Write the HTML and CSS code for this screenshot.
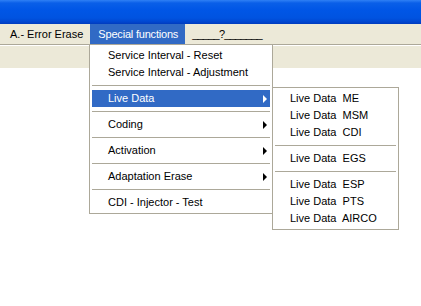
FILE: index.html
```html
<!DOCTYPE html>
<html>
<head>
<meta charset="utf-8">
<link rel="stylesheet" href="styles.css">
</head>
<body>
<div class="window">
  <div class="titlebar"></div>
  <div class="menubar">
    <span class="mitem">A.- Error Erase</span>
    <span class="mitem active">Special functions</span>
    <span class="mitem under">_____?_______</span>
  </div>
  <div class="toolbar"></div>
  <div class="content"></div>

  <div class="menu main">
    <div class="row">Service Interval - Reset</div>
    <div class="row">Service Interval - Adjustment</div>
    <div class="sep"></div>
    <div class="row sub hl">Live Data<span class="arrow"></span></div>
    <div class="sep"></div>
    <div class="row sub">Coding<span class="arrow"></span></div>
    <div class="sep"></div>
    <div class="row sub">Activation<span class="arrow"></span></div>
    <div class="sep"></div>
    <div class="row sub">Adaptation Erase<span class="arrow"></span></div>
    <div class="sep"></div>
    <div class="row">CDI - Injector - Test</div>
  </div>

  <div class="menu submenu">
    <div class="row">Live Data  ME</div>
    <div class="row">Live Data  MSM</div>
    <div class="row">Live Data  CDI</div>
    <div class="sep"></div>
    <div class="row">Live Data  EGS</div>
    <div class="sep"></div>
    <div class="row">Live Data  ESP</div>
    <div class="row">Live Data  PTS</div>
    <div class="row">Live Data  AIRCO</div>
  </div>
</div>
</body>
</html>
```
FILE: styles.css
```css
html, body {
  margin: 0;
  padding: 0;
  background: #ffffff;
}
.window {
  position: relative;
  width: 421px;
  height: 306px;
  overflow: hidden;
  font-family: "Liberation Sans", Arial, sans-serif;
  font-size: 11px;
  color: #000;
}
.titlebar {
  height: 24px;
  background: linear-gradient(#2f80f5 0, #0a5fe8 3px, #0056e6 10px, #0053e0 18px, #0045cf 22px, #003bbd 24px);
}
.menubar {
  height: 20px;
  background: #ece9d8;
  display: flex;
  align-items: stretch;
  padding-left: 3px;
}
.mitem {
  display: flex;
  align-items: center;
  padding: 0 7px;
}
.mitem.active {
  background: #316ac5;
  color: #fff;
  padding: 0 7px 0 8px;
  letter-spacing: -0.2px;
}
.mitem.under {
  letter-spacing: -0.75px;
}
.toolbar {
  height: 23px;
  background: #ece9d8;
  border-top: 1px solid #aca899;
  box-shadow: inset 0 1px 0 #ffffff;
}
.menu {
  position: absolute;
  background: #fff;
  border: 1px solid #aca899;
  box-sizing: border-box;
  padding: 2px;
}
.main {
  left: 89px;
  top: 44px;
  width: 184px;
  height: 170px;
}
.submenu {
  left: 272px;
  top: 87px;
  width: 127px;
  height: 143px;
}
.row {
  position: relative;
  height: 17px;
  line-height: 17px;
  padding-left: 16px;
  white-space: pre;
}
.submenu .row {
  padding-left: 15px;
}
.sep {
  height: 1px;
  background: #aca899;
  margin: 4px 0;
}
.hl {
  background: #316ac5;
  color: #fff;
}
.arrow {
  position: absolute;
  right: 3px;
  top: 5px;
  width: 0;
  height: 0;
  border-top: 4px solid transparent;
  border-bottom: 4px solid transparent;
  border-left: 4px solid #000;
}
.hl .arrow { border-left-color: #fff; }
```
